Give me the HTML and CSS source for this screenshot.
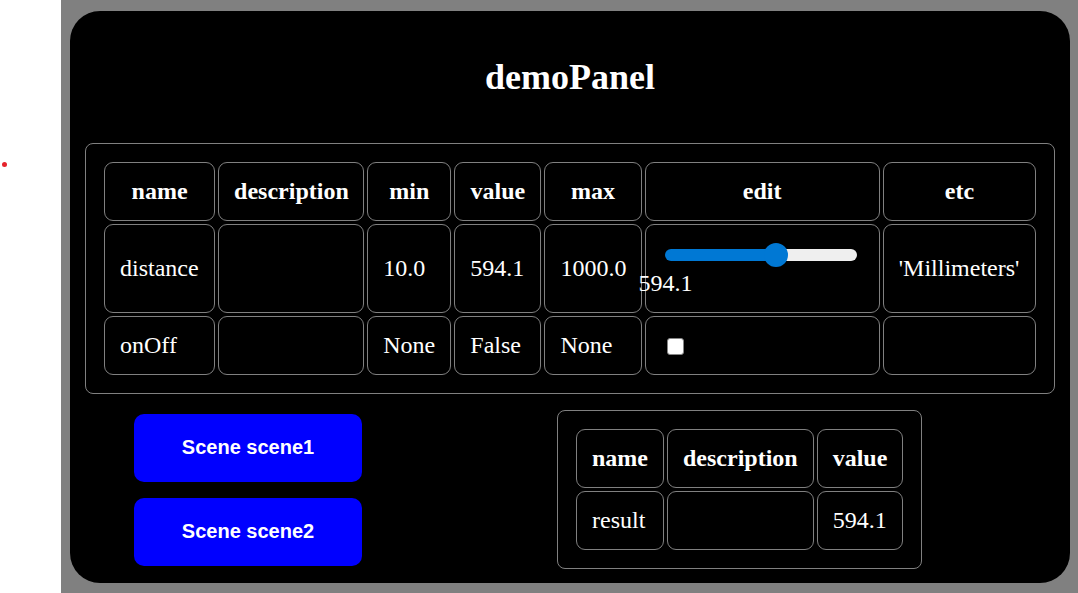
FILE: index.html
```html
<!DOCTYPE html>
<html>
<head>
<meta charset="utf-8">
<link rel="stylesheet" href="styles.css">
</head>
<body>
<div class="gutter"><div class="dot"></div></div>
<div class="stage">
  <div class="panel">
    <h2 class="title">demoPanel</h2>
    <div class="box box-wide">
      <table class="grid grid-wide">
        <tr>
          <th class="c-name">name</th><th class="c-desc">description</th><th class="c-min">min</th><th class="c-value">value</th><th class="c-max">max</th><th class="c-edit">edit</th><th class="c-etc">etc</th>
        </tr>
        <tr>
          <td>distance</td><td></td><td>10.0</td><td>594.1</td><td>1000.0</td>
          <td class="edit">
            <input class="range" type="range" min="10" max="1000" step="0.1" value="594.1" style="--pct: 58%">
            <span class="range-label">594.1</span>
          </td>
          <td>'Millimeters'</td>
        </tr>
        <tr>
          <td>onOff</td><td></td><td>None</td><td>False</td><td>None</td>
          <td class="edit"><input class="check" type="checkbox"></td>
          <td></td>
        </tr>
      </table>
    </div>
    <div class="bottom">
      <div class="buttons">
        <button class="scene-btn">Scene scene1</button>
        <button class="scene-btn">Scene scene2</button>
      </div>
      <div class="box box-small">
        <table class="grid">
          <tr><th>name</th><th>description</th><th>value</th></tr>
          <tr><td>result</td><td></td><td>594.1</td></tr>
        </table>
      </div>
    </div>
  </div>
</div>
</body>
</html>
```

FILE: styles.css
```css
html, body {
  margin: 0;
  padding: 0;
  background: #ffffff;
}

body {
  display: flex;
  height: 593px;
  overflow: hidden;
  font-family: "Liberation Serif", "Times New Roman", serif;
}

.gutter {
  width: 61px;
  flex: none;
}

.dot {
  width: 5px;
  height: 5px;
  border-radius: 50%;
  background: #e5232b;
  margin: 162px 0 0 2px;
}

.stage {
  flex: 1;
  background: #808080;
  padding: 11px 8px 10px 9px;
  box-sizing: border-box;
  height: 593px;
}

.panel {
  background: #000000;
  border-radius: 30px;
  padding: 15px;
  height: 572px;
  box-sizing: border-box;
  color: #ffffff;
}

.title {
  margin: 30px 0 0;
  font-size: 36px;
  font-weight: bold;
  text-align: center;
  line-height: normal;
}

.box {
  border: 1px solid #808080;
  border-radius: 8px;
  padding: 15px;
}

.box-wide {
  margin-top: 45px;
}

.box-small {
  display: inline-block;
  margin-left: 195px;
}

.grid {
  border-collapse: separate;
  border-spacing: 3px;
  font-size: 24px;
  color: #ffffff;
}

.grid-wide {
  width: 100%;
  table-layout: fixed;
}

.grid th,
.grid td {
  border: 1px solid #808080;
  border-radius: 9px;
  padding: 15px;
  line-height: normal;
  vertical-align: middle;
  white-space: nowrap;
}

.c-name { width: 79px; }
.c-desc { width: 114px; }
.c-min { width: 52px; }
.c-value { width: 55px; }
.c-max { width: 65px; }
.c-edit { width: 203px; }
.c-etc { width: 121px; }

.grid th {
  font-weight: bold;
  text-align: center;
}

.grid td {
  text-align: left;
}

.range {
  -webkit-appearance: none;
  appearance: none;
  display: block;
  width: 192px;
  height: 24px;
  margin: 3px 3px 3px 4px;
  padding: 0;
  background: transparent;
}

.range::-webkit-slider-runnable-track {
  height: 12px;
  border-radius: 6px;
  background: linear-gradient(to right, #0078d4 var(--pct), #efefef var(--pct));
}

.range::-webkit-slider-thumb {
  -webkit-appearance: none;
  appearance: none;
  width: 24px;
  height: 24px;
  border-radius: 50%;
  background: #0078d4;
  border: none;
  margin-top: -6px;
}

.range-label {
  display: block;
  position: relative;
  left: -22px;
}

.check {
  -webkit-appearance: none;
  appearance: none;
  width: 17px;
  height: 17px;
  margin: 2px 4px 4px 6px;
  background: #ffffff;
  border: 1px solid #858585;
  border-radius: 3px;
  box-sizing: border-box;
  vertical-align: middle;
}

.bottom {
  display: flex;
  align-items: center;
  margin-top: 16px;
}

.buttons {
  display: flex;
  flex-direction: column;
  gap: 16px;
  margin-left: 49px;
}

.scene-btn {
  width: 228px;
  height: 68px;
  border: none;
  border-radius: 10px;
  background: #0000ff;
  color: #ffffff;
  font-family: "Liberation Sans", Arial, sans-serif;
  font-weight: bold;
  font-size: 20px;
  padding: 0;
}
```
